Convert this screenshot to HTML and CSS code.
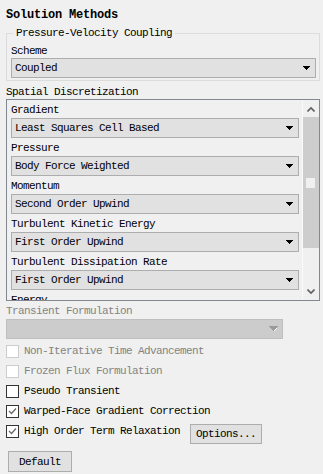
FILE: index.html
```html
<!DOCTYPE html>
<html lang="en">
<head>
    <meta charset="UTF-8">
    <meta name="viewport" content="width=device-width, initial-scale=1.0">
    <title>Solution Methods</title>
    <link rel="stylesheet" href="styles.css">
</head>
<body>
    <div class="panel">
        <div class="title">Solution Methods</div>

        <fieldset class="group">
            <legend>Pressure-Velocity Coupling</legend>
            <div class="label">Scheme</div>
            <div class="select">
                <span>Coupled</span>
                <svg class="arrow" width="7" height="4" viewBox="0 0 7 4"><path d="M0 0h7v1H0zM1 1h5v1H1zM2 2h3v1H2zM3 3h1v1H3z"/></svg>
            </div>
        </fieldset>

        <div class="section-label">Spatial Discretization</div>
        <div class="scroll-box">
            <div class="scroll-content">
                <div class="field">
                    <div class="label">Gradient</div>
                    <div class="select">
                        <span>Least Squares Cell Based</span>
                        <svg class="arrow" width="7" height="4" viewBox="0 0 7 4"><path d="M0 0h7v1H0zM1 1h5v1H1zM2 2h3v1H2zM3 3h1v1H3z"/></svg>
                    </div>
                </div>
                <div class="field">
                    <div class="label">Pressure</div>
                    <div class="select">
                        <span>Body Force Weighted</span>
                        <svg class="arrow" width="7" height="4" viewBox="0 0 7 4"><path d="M0 0h7v1H0zM1 1h5v1H1zM2 2h3v1H2zM3 3h1v1H3z"/></svg>
                    </div>
                </div>
                <div class="field">
                    <div class="label">Momentum</div>
                    <div class="select">
                        <span>Second Order Upwind</span>
                        <svg class="arrow" width="7" height="4" viewBox="0 0 7 4"><path d="M0 0h7v1H0zM1 1h5v1H1zM2 2h3v1H2zM3 3h1v1H3z"/></svg>
                    </div>
                </div>
                <div class="field">
                    <div class="label">Turbulent Kinetic Energy</div>
                    <div class="select">
                        <span>First Order Upwind</span>
                        <svg class="arrow" width="7" height="4" viewBox="0 0 7 4"><path d="M0 0h7v1H0zM1 1h5v1H1zM2 2h3v1H2zM3 3h1v1H3z"/></svg>
                    </div>
                </div>
                <div class="field">
                    <div class="label">Turbulent Dissipation Rate</div>
                    <div class="select">
                        <span>First Order Upwind</span>
                        <svg class="arrow" width="7" height="4" viewBox="0 0 7 4"><path d="M0 0h7v1H0zM1 1h5v1H1zM2 2h3v1H2zM3 3h1v1H3z"/></svg>
                    </div>
                </div>
                <div class="field">
                    <div class="label">Energy</div>
                </div>
            </div>
            <div class="scrollbar">
                <div class="sb-btn">
                    <svg width="8" height="6" viewBox="0 0 8 6"><polyline points="0.5,5.5 4,2 7.5,5.5" /></svg>
                </div>
                <div class="sb-thumb"><div class="sb-grip"></div></div>
                <div class="sb-track"></div>
                <div class="sb-btn">
                    <svg width="8" height="6" viewBox="0 0 8 6"><polyline points="0.5,0.5 4,4 7.5,0.5" /></svg>
                </div>
            </div>
        </div>

        <div class="section-label disabled">Transient Formulation</div>
        <div class="select off">
            <span></span>
            <svg class="arrow" width="9" height="6" viewBox="0 0 9 6"><path d="M0 0h9v1H0zM1 1h7v1H1zM2 2h5v1H2zM3 3h3v1H3zM4 4h1v1H4z" fill="#9a9a9a"/><path d="M5 4h1v1H5zM6 3h1v1H6zM7 2h1v1H7z" fill="#ffffff"/></svg>
        </div>

        <div class="checks">
            <div class="check disabled"><span class="box"></span><span>Non-Iterative Time Advancement</span></div>
            <div class="check disabled"><span class="box"></span><span>Frozen Flux Formulation</span></div>
            <div class="check"><span class="box"></span><span>Pseudo Transient</span></div>
            <div class="check">
                <span class="box"><svg width="11" height="11" viewBox="0 0 11 11"><polyline points="2,5 4.5,7.5 9,2.5" /></svg></span>
                <span>Warped-Face Gradient Correction</span>
            </div>
            <div class="check">
                <span class="box"><svg width="11" height="11" viewBox="0 0 11 11"><polyline points="2,5 4.5,7.5 9,2.5" /></svg></span>
                <span>High Order Term Relaxation</span>
                <button class="btn options">Options...</button>
            </div>
        </div>

        <button class="btn default">Default</button>
    </div>
</body>
</html>
```

FILE: styles.css
```css
* {
    box-sizing: border-box;
}

body {
    margin: 0;
    background: #f0f0f0;
    font-family: 'Liberation Mono', monospace;
    font-size: 11px;
    letter-spacing: -0.6px;
    color: #000;
}

.panel {
    width: 323px;
    padding: 7px 3px 0 6px;
}

.title {
    font-weight: bold;
    font-size: 12px;
    letter-spacing: -0.2px;
    line-height: 16px;
}

.group {
    margin: 2px 0 0;
    padding: 0 3px 2px 4px;
    border: 1px solid #dcdcdc;
    min-width: 0;
}

.group legend {
    margin-left: 2px;
    padding: 0 3px;
    line-height: 16px;
}

.group .label {
    margin-top: 3px;
    line-height: 14px;
}

.select {
    height: 20px;
    display: flex;
    align-items: center;
    justify-content: space-between;
    padding: 0 5px 0 3px;
    border: 1px solid #adadad;
    background: #e1e1e1;
    white-space: nowrap;
}

.arrow {
    flex: none;
    fill: #000;
}

.section-label {
    margin-top: 4px;
    line-height: 14px;
}

.section-label.disabled {
    margin-top: 3px;
    color: #838383;
}

.scroll-box {
    display: flex;
    height: 202px;
    border: 1px solid #828790;
}

.scroll-content {
    flex: 1;
    min-width: 0;
    padding: 2px 3px 0 4px;
    overflow: hidden;
}

.field {
    margin-bottom: 2px;
}

.field .label {
    line-height: 16px;
}

.scrollbar {
    width: 17px;
    display: flex;
    flex-direction: column;
    border-left: 1px solid #fafafa;
    background: #f0f0f0;
}

.sb-btn {
    height: 17px;
    display: flex;
    align-items: center;
    justify-content: center;
}

.sb-btn svg {
    fill: none;
    stroke: #606060;
    stroke-width: 1.6;
}

.sb-thumb {
    height: 131px;
    background: #cdcdcd;
    padding-top: 61px;
}

.sb-grip {
    width: 9px;
    height: 10px;
    margin-left: 3px;
    background: #f0f0f0;
}

.sb-track {
    flex: 1;
}

.select.off {
    width: 277px;
    margin-top: 1px;
    padding-right: 4px;
    border-color: #bfbfbf;
    background: #cccccc;
}

.checks {
    margin-top: 2px;
}

.check {
    height: 20px;
    display: flex;
    align-items: center;
    white-space: nowrap;
}

.box {
    width: 13px;
    height: 13px;
    margin-right: 5px;
    border: 1px solid #333;
    background: #fff;
    display: flex;
    align-items: center;
    justify-content: center;
}

.box svg {
    fill: none;
    stroke: #6a6a6a;
    stroke-width: 1.3;
}

.check.disabled {
    color: #838383;
}

.check.disabled .box {
    border-color: #cccccc;
}

.btn {
    font-family: inherit;
    font-size: 11px;
    letter-spacing: -0.6px;
    color: #000;
    background: #e1e1e1;
    border: 1px solid #adadad;
    padding: 0;
    margin: 0;
}

.options {
    align-self: flex-start;
    width: 72px;
    height: 20px;
    margin: 3px 0 0 10px;
}

.default {
    display: block;
    width: 64px;
    height: 21px;
    margin: 10px 0 0 2px;
}
```
